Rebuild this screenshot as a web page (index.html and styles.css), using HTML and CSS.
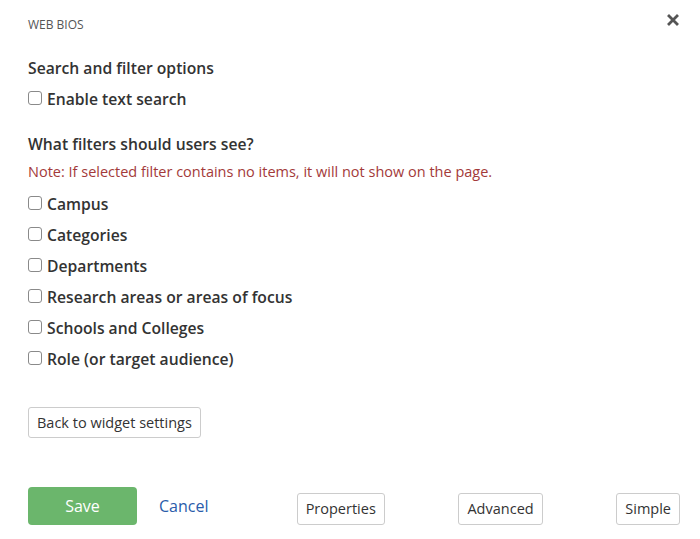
FILE: index.html
```html
<!DOCTYPE html>
<html>
<head>
<meta charset="utf-8">
<link rel="stylesheet" href="styles.css">
</head>
<body>
<div class="dialog">
  <div class="topbar">
    <div class="title">WEB BIOS</div>
    <button class="close" aria-label="Close">
      <svg width="12" height="12" viewBox="0 0 12 12"><path d="M2 2 L10 10 M10 2 L2 10" stroke="#555" stroke-width="2.8" stroke-linecap="square"/></svg>
    </button>
  </div>

  <h3 class="heading first">Search and filter options</h3>
  <label class="check first-check"><input type="checkbox"><span>Enable text search</span></label>

  <h3 class="heading second">What filters should users see?</h3>
  <p class="note">Note: If selected filter contains no items, it will not show on the page.</p>

  <div class="filters">
    <label class="check"><input type="checkbox"><span>Campus</span></label>
    <label class="check"><input type="checkbox"><span>Categories</span></label>
    <label class="check"><input type="checkbox"><span>Departments</span></label>
    <label class="check"><input type="checkbox"><span>Research areas or areas of focus</span></label>
    <label class="check"><input type="checkbox"><span>Schools and Colleges</span></label>
    <label class="check"><input type="checkbox"><span>Role (or target audience)</span></label>
  </div>

  <button class="btn back">Back to widget settings</button>

  <div class="footer">
    <div class="primary">
      <button class="save">Save</button>
      <a class="cancel" href="#">Cancel</a>
    </div>
    <button class="btn">Properties</button>
    <button class="btn">Advanced</button>
    <button class="btn">Simple</button>
  </div>
</div>
</body>
</html>
```

FILE: styles.css
```css
* { box-sizing: border-box; }
html, body { margin: 0; padding: 0; background: #fff; }
body {
  font-family: "Open Sans", "Liberation Sans", sans-serif;
  color: #333;
}
.dialog {
  width: 700px;
  height: 539px;
  padding: 0 20px 0 28px;
  display: flex;
  flex-direction: column;
}
.topbar {
  display: flex;
  justify-content: space-between;
  align-items: flex-start;
  padding-top: 17px;
  height: 33px;
}
.title {
  font-size: 12px;
  line-height: 16px;
  color: #555;
}
.close {
  border: 0;
  background: none;
  padding: 0;
  margin: -3px 1px 0 0;
  width: 12px;
  height: 12px;
  display: flex;
}
.heading {
  font-size: 15.7px;
  font-weight: 600;
  margin: 0;
  line-height: 20px;
  color: #333;
}
.heading.first { margin-top: 25px; }
.heading.second { margin-top: 20px; }
.check {
  display: flex;
  align-items: center;
  font-size: 15.7px;
  font-weight: 600;
  line-height: 20px;
  height: 31px;
  color: #333;
}
.first-check { margin-top: 5px; }
.check input {
  margin: 0 5px 0 0;
  width: 14px;
  height: 14px;
  appearance: none;
  -webkit-appearance: none;
  border: 1px solid #8a8a8a;
  border-radius: 3px;
  background: #fff;
  position: relative;
  top: -1px;
}
.note {
  margin: 8px 0 0;
  font-size: 14.5px;
  line-height: 20px;
  color: #a33a3a;
}
.filters { display: flex; flex-direction: column; margin-top: 6px; }
.btn {
  font-family: inherit;
  font-size: 14.5px;
  color: #333;
  background: #fff;
  border: 1px solid #ccc;
  border-radius: 3px;
  height: 32px;
  padding: 0 8px;
  line-height: 30px;
}
.back {
  align-self: flex-start;
  margin-top: 33px;
  height: 31px;
}
.footer {
  margin-top: 49px;
  display: flex;
  justify-content: space-between;
  align-items: flex-end;
}
.primary {
  width: 195px;
  display: flex;
  align-items: center;
}
.save {
  font-family: inherit;
  width: 109px;
  height: 38px;
  border: 0;
  border-radius: 4px;
  background: #6bb66c;
  color: #fff;
  font-size: 16px;
}
.cancel {
  margin-left: 22px;
  color: #2a5caa;
  text-decoration: none;
  font-size: 16px;
}
```
